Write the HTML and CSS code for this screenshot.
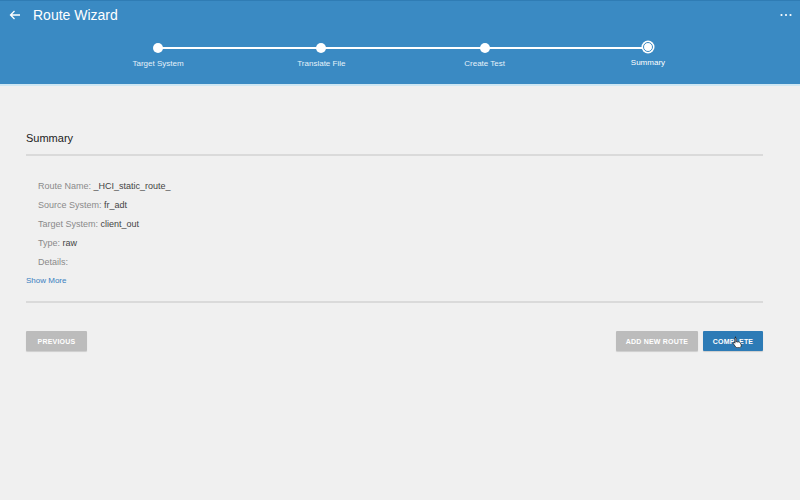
FILE: index.html
```html
<!DOCTYPE html>
<html>
	<head>
		<meta charset="UTF-8">
		<meta name="viewport" content="width=device-width, initial-scale=1">
		<title>Route Wizard</title>
		<link rel="stylesheet" href="styles.css">
	</head>
	<body>
		<header class="appbar">
			<div class="appbar-top">
				<span class="back">
					<svg width="12" height="10" viewBox="0 0 12 10"><path d="M11 5H1.5M5.5 1L1.5 5l4 4" fill="none" stroke="#fff" stroke-width="1.3"/></svg>
				</span>
				<h1>Route Wizard</h1>
				<span class="more">
					<svg width="12" height="4" viewBox="0 0 12 4"><circle cx="1.5" cy="2" r="1.1" fill="#fff"/><circle cx="6" cy="2" r="1.1" fill="#fff"/><circle cx="10.5" cy="2" r="1.1" fill="#fff"/></svg>
				</span>
			</div>
			<ol class="stepper">
				<li class="step done"><span class="dot"></span><span class="label">Target System</span></li>
				<li class="step done"><span class="dot"></span><span class="label">Translate File</span></li>
				<li class="step done"><span class="dot"></span><span class="label">Create Test</span></li>
				<li class="step current"><span class="dot"></span><span class="label">Summary</span></li>
			</ol>
		</header>

		<main class="content">
			<h2 class="section-title">Summary</h2>
			<hr>
			<ul class="details">
				<li><span class="key">Route Name:</span> _HCI_static_route_</li>
				<li><span class="key">Source System:</span> fr_adt</li>
				<li><span class="key">Target System:</span> client_out</li>
				<li><span class="key">Type:</span> raw</li>
				<li><span class="key">Details:</span></li>
			</ul>
			<a class="show-more" href="#">Show More</a>
			<hr>
			<div class="actions">
				<button class="btn btn-grey">PREVIOUS</button>
				<div class="actions-right">
					<button class="btn btn-grey">ADD NEW ROUTE</button>
					<button class="btn btn-blue">COMPLETE
						<svg class="pointer" width="11" height="12" viewBox="0 0 11 12"><path d="M3 1.2c.6 0 1 .4 1 1V6l.4-.3c.5-.2 1 0 1.2.4l.3-.2c.5-.2 1 0 1.2.4.5-.2 1.1 0 1.3.5l.8 2.1c.3 1-.3 2.5-1.7 2.8H5.2c-.7 0-1.2-.3-1.6-.8L1.3 7.6c-.3-.4-.2-.9.2-1.1.4-.2.8-.1 1.1.2l.4.5V2.2c0-.6.4-1 1-1z" fill="#fff" stroke="#222" stroke-width=".8"/></svg>
					</button>
				</div>
			</div>
		</main>
	</body>
</html>
```

FILE: styles.css
```css
html, body {
	margin: 0;
	padding: 0;
}

body {
	background: #f0f0f0;
	font-family: "Liberation Sans", Arial, sans-serif;
	color: #333;
	width: 800px;
	height: 500px;
	overflow: hidden;
}

/* top bar with title and wizard steps */
.appbar {
	background: #3a8ac3;
	height: 86px;
	border-top: 1px solid #2f7cb4;
	border-bottom: 2px solid #cfe7f3;
	box-sizing: border-box;
	color: #fff;
}

.appbar-top {
	display: flex;
	align-items: center;
	height: 28px;
	padding: 0 8px 0 9px;
}

.back {
	display: flex;
	width: 24px;
}

.appbar h1 {
	margin: 0;
	font-size: 14px;
	font-weight: normal;
	flex: 1;
}

.more {
	display: flex;
}

.stepper {
	list-style: none;
	margin: 0;
	padding: 0 0 0 6px;
	display: flex;
	justify-content: center;
	margin-top: 14px;
}

.step {
	width: 163.3px;
	display: flex;
	flex-direction: column;
	align-items: center;
	position: relative;
}

/* connector line to the next step */
.step + .step::before {
	content: "";
	position: absolute;
	top: 4px;
	right: 50%;
	width: 100%;
	height: 2px;
	background: #fff;
}

.dot {
	width: 10px;
	height: 10px;
	border-radius: 50%;
	background: #fff;
	position: relative;
	z-index: 1;
}

.current .dot {
	width: 8px;
	height: 8px;
	margin-top: -1px;
	border: 1.5px solid #3a8ac3;
	box-shadow: 0 0 0 1.5px #fff;
}

.label {
	font-size: 8px;
	margin-top: 6px;
	color: #e4f1fa;
}

.current .label {
	color: #fff;
}

/* summary panel */
.content {
	padding: 46px 37px 0 26px;
}

.section-title {
	margin: 0;
	font-size: 11px;
	font-weight: normal;
	color: #222;
	line-height: 13px;
}

hr {
	border: none;
	border-top: 2px solid #dadada;
	margin: 9px 0 0;
}

.details {
	list-style: none;
	margin: 25px 0 0;
	padding: 0 0 0 12px;
	font-size: 9px;
	color: #444;
}

.details li {
	line-height: 11px;
	margin-bottom: 8px;
}

.details .key {
	color: #8a8a8a;
}

.show-more {
	display: block;
	font-size: 8px;
	color: #3a7fc0;
	text-decoration: none;
	margin-top: 4px;
	line-height: 10px;
}

.content .show-more + hr {
	margin-top: 15px;
}

.actions {
	display: flex;
	justify-content: space-between;
	padding-top: 28px;
}

.actions-right {
	display: flex;
	gap: 5px;
}

.btn {
	height: 20px;
	border: none;
	border-radius: 1px;
	color: #fff;
	font-family: inherit;
	font-size: 7px;
	font-weight: bold;
	letter-spacing: .2px;
	padding: 0;
	white-space: nowrap;
	position: relative;
	box-shadow: 0 1px 1px rgba(0, 0, 0, .15);
}

.btn-grey {
	background: #bcbcbc;
}

.actions > .btn-grey {
	width: 61px;
}

.actions-right .btn-grey {
	width: 82px;
}

.btn-blue {
	background: #2d7bb6;
	width: 60px;
}

.pointer {
	position: absolute;
	left: 29px;
	top: 5px;
}
```
